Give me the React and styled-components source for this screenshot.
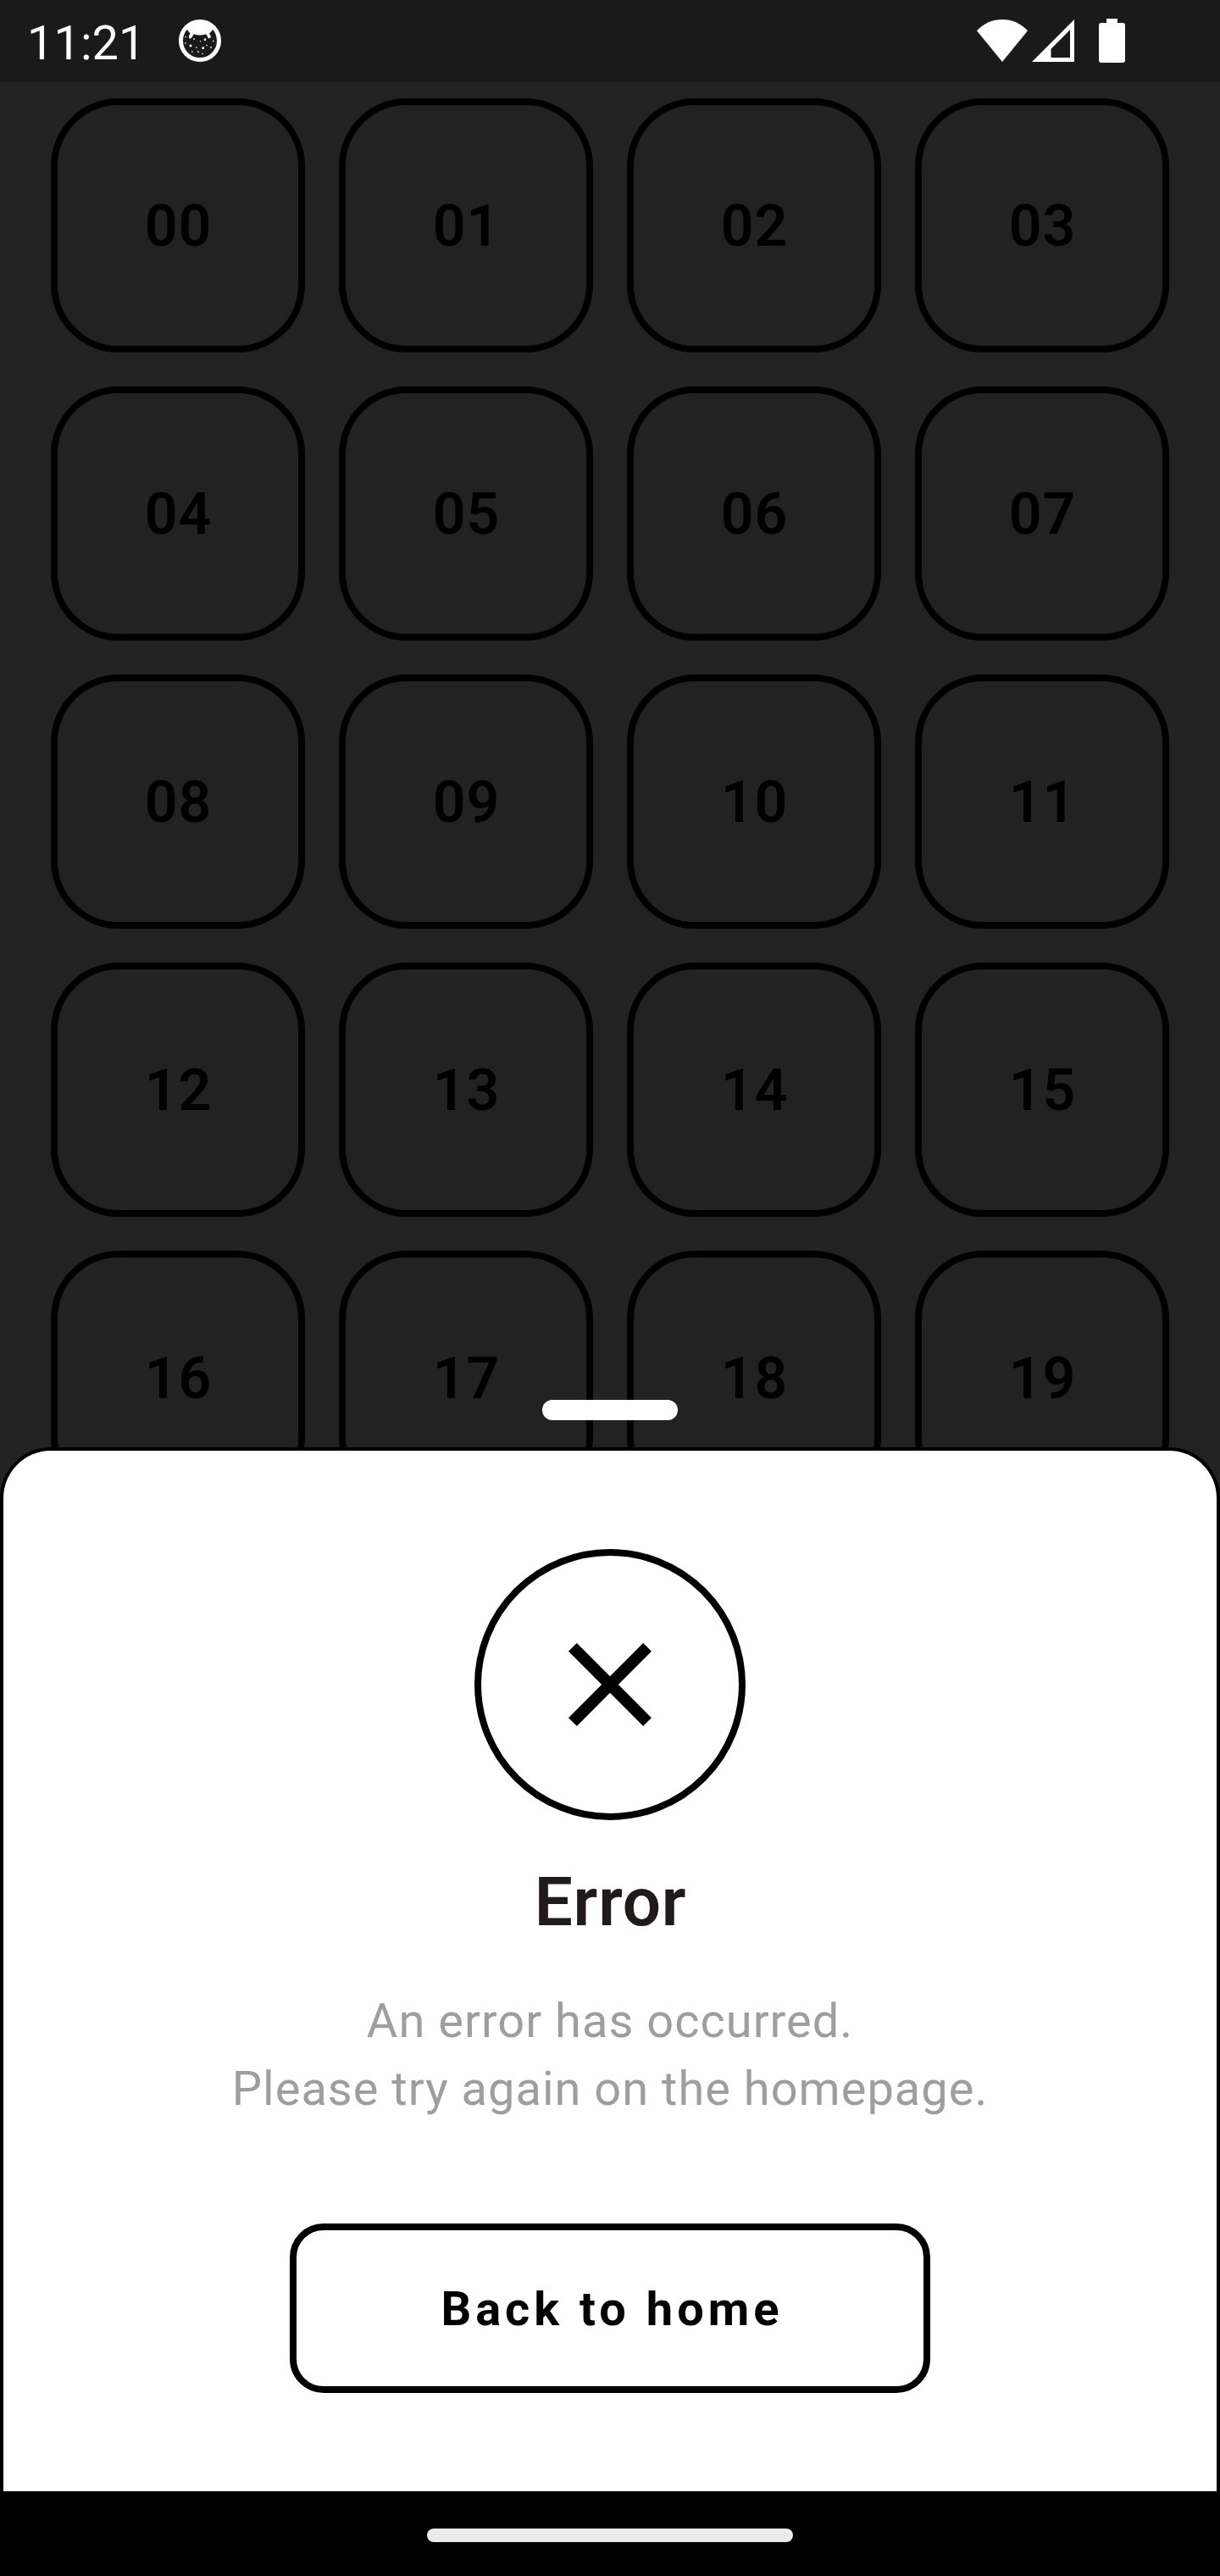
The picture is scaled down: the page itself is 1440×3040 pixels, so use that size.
import React from "react";
import styled, { createGlobalStyle } from "styled-components";

const GlobalStyle = createGlobalStyle`
  *, *::before, *::after { box-sizing: border-box; }
  body { margin: 0; background: #000; }
`;

const Screen = styled.div`
  position: relative;
  width: 1440px;
  height: 3040px;
  overflow: hidden;
  display: flex;
  flex-direction: column;
  background: #222222;
  font-family: Roboto, "Liberation Sans", sans-serif;
`;

const StatusBar = styled.header`
  flex: none;
  height: 96px;
  display: flex;
  align-items: center;
  justify-content: space-between;
  padding: 0 112px 0 32px;
  background: #1a1a1a;
  color: #fff;
`;

const StatusGroup = styled.div`
  display: flex;
  align-items: center;
  height: 96px;
`;

const Clock = styled.time`
  width: 172px;
  font-size: 56px;
  line-height: 66px;
  padding-top: 6px;
  white-space: nowrap;
`;

const StatusIcon = styled.svg`
  display: block;
  flex: none;
  margin-left: ${(p) => p.$gap || 0}px;
`;

const Grid = styled.main`
  flex: 1;
  min-height: 0;
  overflow: hidden;
  display: grid;
  grid-template-columns: repeat(4, 300px);
  grid-auto-rows: 300px;
  gap: 40px;
  padding: 20px 60px 0;
`;

const Tile = styled.div`
  display: flex;
  align-items: center;
  justify-content: center;
  padding: 2px 0 0 1px;
  border: 8px solid #000;
  border-radius: 80px;
  color: #000;
  font-size: 68px;
  font-weight: 600;
  line-height: 84px;
  letter-spacing: 1px;
`;

const SheetLayer = styled.section`
  position: absolute;
  left: 0;
  right: 0;
  bottom: 100px;
  display: flex;
  flex-direction: column;
  align-items: center;
  gap: 32px;
`;

const Handle = styled.div`
  width: 160px;
  height: 24px;
  border-radius: 12px;
  background: #fff;
`;

const Sheet = styled.div`
  width: 100%;
  height: 1232px;
  display: flex;
  flex-direction: column;
  align-items: center;
  padding-top: 116px;
  background: #fff;
  border: 4px solid #000;
  border-bottom: 0;
  border-radius: 60px 60px 0 0;
`;

const Badge = styled.div`
  display: flex;
  align-items: center;
  justify-content: center;
  width: 320px;
  height: 320px;
  border: 8px solid #000;
  border-radius: 50%;
`;

const Title = styled.h1`
  margin: 49px 0 0;
  padding-left: 1px;
  color: #201a1b;
  font-size: 80px;
  font-weight: 570;
  line-height: 96px;
  letter-spacing: 0.8px;
`;

const Message = styled.p`
  margin: 52px 0 0;
  color: #9e9e9e;
  font-size: 56px;
  line-height: 80px;
  letter-spacing: 1px;
  text-align: center;
  white-space: nowrap;
`;

const HomeButton = styled.button`
  width: 756px;
  height: 200px;
  margin: 119px 0 0;
  padding: 2px 0 0 5px;
  border: 8px solid #000;
  border-radius: 40px;
  background: #fff;
  color: #000;
  font-family: inherit;
  font-size: 56px;
  font-weight: 680;
  line-height: 66px;
  letter-spacing: 5px;
`;

const NavBar = styled.footer`
  flex: none;
  height: 100px;
  display: flex;
  align-items: center;
  justify-content: center;
  background: #000;
`;

const NavPill = styled.div`
  width: 432px;
  height: 16px;
  margin-top: 4px;
  border-radius: 8px;
  background: #ebebeb;
`;

const tiles = Array.from({ length: 20 }, (_, i) => String(i).padStart(2, "0"));

const specks = [
  [219, 43.5, 1.4], [219, 51, 1.4], [225, 54, 2.6], [229, 46, 1.6],
  [236.5, 48.7, 1.2], [242, 46.7, 2.4], [251.7, 48.5, 1.4], [244, 53.5, 1.4],
  [231.7, 56, 1.4], [239.7, 56.7, 2.6], [249, 56, 1.6], [226.8, 61, 1.4],
  [234, 61, 1.6], [239, 63.5, 1.4],
];

export default function App() {
  return (
    <Screen>
      <GlobalStyle />
      <StatusBar>
        <StatusGroup>
          <Clock>11:21</Clock>
          <StatusIcon $gap={7} width="50" height="50" viewBox="211 23 50 50">
            <circle cx="236" cy="48" r="22.5" fill="none" stroke="#fff" strokeWidth="5" />
            <path
              d="M217 32 Q236 18 255 32 L250.500 35.500 Q249.500 38 247 39.200 L248.800 43 Q249 45.500 246.500 45.300 Q245.500 45 244.600 42.500 L243.200 40.200 Q236 42.800 228.800 40.200 L226.600 44 Q225.600 46 223.600 45.200 Q222.200 44 223.500 41.600 L224.600 39.300 Q222.500 38 221.300 35.300 Z"
              fill="#fff"
            />
            {specks.map(([x, y, s]) => (
              <rect key={`${x}-${y}`} x={x - s / 2} y={y - s / 2} width={s} height={s} fill="#fff" />
            ))}
          </StatusIcon>
        </StatusGroup>
        <StatusGroup>
          <StatusIcon width="60" height="50" viewBox="0 0 60 50">
            <path d="M0 13.300 C16 -4.400 44 -4.400 60 13.300 L30 50 Z" fill="#fff" />
          </StatusIcon>
          <StatusIcon $gap={5} width="50" height="50" viewBox="0 0 50 50">
            <path d="M50 0 V50 H0 Z M45 12.300 L22.500 34.800 V45 H45 Z" fill="#fff" fillRule="evenodd" />
          </StatusIcon>
          <StatusIcon $gap={29} width="31" height="52" viewBox="0 0 31 52">
            <path d="M9 0 H22 V5 H28 Q31 5 31 8 V49 Q31 52 28 52 H3 Q0 52 0 49 V8 Q0 5 3 5 H9 Z" fill="#fff" />
          </StatusIcon>
        </StatusGroup>
      </StatusBar>
      <Grid>
        {tiles.map((label) => (
          <Tile key={label}>{label}</Tile>
        ))}
      </Grid>
      <SheetLayer>
        <Handle />
        <Sheet>
          <Badge>
            <svg width="168" height="168" viewBox="0 0 24 24">
              <path
                d="M19 6.410 17.590 5 12 10.590 6.410 5 5 6.410 10.590 12 5 17.590 6.410 19 12 13.410 17.590 19 19 17.590 13.410 12z"
                fill="#000"
              />
            </svg>
          </Badge>
          <Title>Error</Title>
          <Message>
            An error has occurred.
            <br />
            Please try again on the homepage.
          </Message>
          <HomeButton type="button">Back to home</HomeButton>
        </Sheet>
      </SheetLayer>
      <NavBar>
        <NavPill />
      </NavBar>
    </Screen>
  );
}
